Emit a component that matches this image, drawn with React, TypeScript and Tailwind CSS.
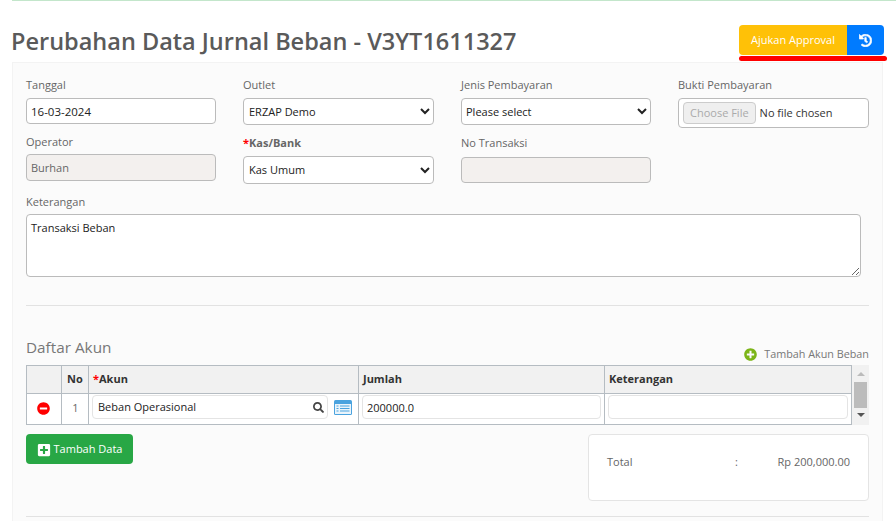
import { FaHistory, FaMinusCircle, FaPlusCircle, FaPlusSquare, FaSearch } from 'react-icons/fa';

const label = 'block text-[11px] leading-[17px] text-[#666]';
const field = 'h-[27px] w-full rounded border border-[#bbb] bg-white text-[11px] text-[#222]';
const readonly = 'w-full rounded border border-[#bbb] bg-[#f3f0ee] px-1 text-[11px] text-[#666]';

function Select({ value, className }: { value: string; className: string }) {
  return (
    <select defaultValue={value} className={`${field} ${className} [appearance:auto]`}>
      <option>{value}</option>
    </select>
  );
}

function App() {
  return (
    <div className="h-[521px] w-[896px] overflow-hidden bg-white font-['Open_Sans',sans-serif]">
      <div className="ml-[12px] h-px bg-[#c3e6cb]" />
      <div className="ml-[12px] mr-[12px] flex h-[61px] items-start justify-between">
        <h1 className="mt-[23px] -ml-[1px] text-[23.5px] leading-[34px] font-semibold text-[#5a5a5a]">
          Perubahan Data Jurnal Beban - V3YT1611327
        </h1>
        <div className="relative mt-[24px] flex h-[30px] w-[145px]">
          <button className="w-[108px] rounded-l bg-[#ffc107] text-[11px] text-white">Ajukan Approval</button>
          <button className="flex flex-1 items-center justify-center rounded-r bg-[#007bff] text-white">
            <FaHistory className="h-[13px] w-[13px]" stroke="currentColor" strokeWidth={24} />
          </button>
          <div className="absolute top-[31px] left-0 h-[5px] w-[148px] rounded-full bg-[#f00]" />
        </div>
      </div>

      <div className="ml-[12px] mr-[13px] h-[459px] border-t border-l border-r border-[#f3f3f3] bg-[#fbfbfb] pt-[13px] pr-[13px] pl-[13px]">
        <div className="grid grid-cols-[190px_191px_190px_191px] gap-x-[27px]">
          <div>
            <label className={label}>Tanggal</label>
            <input defaultValue="16-03-2024" className="mt-[5px] h-[26px] w-full rounded border border-[#bbb] bg-white px-1 text-[11.5px] text-[#222]" />
            <label className={`${label} mt-[9px]`}>Operator</label>
            <input readOnly defaultValue="Burhan" className={`${readonly} mt-[4px] h-[27px]`} />
          </div>
          <div>
            <label className={label}>Outlet</label>
            <Select value="ERZAP Demo" className="mt-[5px] pl-px" />
            <label className={`${label} mt-[9px] font-bold`}>
              <span className="text-[#f00]">*</span>Kas/Bank
            </label>
            <Select value="Kas Umum" className="mt-[5px] h-[28px] pb-[2px] pl-px" />
          </div>
          <div>
            <label className={label}>Jenis Pembayaran</label>
            <Select value="Please select" className="mt-[5px]" />
            <label className={`${label} mt-[9px]`}>No Transaksi</label>
            <input readOnly className={`${readonly} mt-[6px] h-[26px]`} />
          </div>
          <div>
            <label className={label}>Bukti Pembayaran</label>
            <div className="mt-[5px] flex h-[30px] items-center rounded border border-[#bbb] bg-white px-1 text-[11px] text-[#333]">
              <span className="rounded-sm border border-[#ccc] bg-[#efefef] px-[6px] py-[2px] leading-[16px] text-[#aaa]">Choose File</span>
              <span className="ml-[4px]">No file chosen</span>
            </div>
          </div>
        </div>

        <label className={`${label} mt-[9px]`}>Keterangan</label>
        <textarea defaultValue="Transaksi Beban" className="mt-[4px] block h-[63px] w-[835px] resize-y rounded border border-[#bbb] bg-white px-1 pt-[5px] text-[11px] text-[#222]" />

        <hr className="mt-[28px] border-[#e2e2e2]" />

        <div className="mt-[31px] flex h-[28px] items-start justify-between">
          <span className="-mt-px text-[15.3px] leading-[22px] text-[#777]">Daftar Akun</span>
          <span className="mt-[9px] flex items-center gap-[7px] text-[10.8px] leading-[16px] text-[#777]">
            <FaPlusCircle className="h-[13px] w-[13px] text-[#7cb518]" /> Tambah Akun Beban
          </span>
        </div>

        <div className="flex">
          <table className="w-[825px] table-fixed border-collapse text-[11px]">
            <colgroup>
              <col className="w-[35px]" />
              <col className="w-[27px]" />
              <col className="w-[270px]" />
              <col className="w-[246px]" />
              <col className="w-[247px]" />
            </colgroup>
            <thead>
              <tr className="h-[28px] bg-[#f1f1f1] text-[#333]">
                <th className="border border-[#b5bcc2]" />
                <th className="border border-[#b5bcc2] font-bold">No</th>
                <th className="border border-[#b5bcc2] px-1 text-left font-bold">
                  <span className="text-[#f00]">*</span>Akun
                </th>
                <th className="border border-[#b5bcc2] px-1 text-left font-bold">Jumlah</th>
                <th className="border border-[#b5bcc2] px-1 text-left font-bold">Keterangan</th>
              </tr>
            </thead>
            <tbody>
              <tr className="h-[31px] bg-white">
                <td className="border border-[#b5bcc2] pr-px pb-[2px] text-center">
                  <FaMinusCircle className="mx-auto h-[13px] w-[13px] text-[#f00]" />
                </td>
                <td className="border border-[#b5bcc2] pb-[2px] pl-px text-center text-[#666]">1</td>
                <td className="border border-[#b5bcc2] px-[3px] pt-[1px] align-top">
                  <div className="flex items-center gap-[6px]">
                    <div className="flex h-[24px] w-[236px] items-center justify-between rounded border border-[#e4e4e4] bg-white pt-px pr-[3px] pl-[5px] text-[#222]">
                      Beban Operasional
                      <FaSearch className="h-[11px] w-[11px] text-[#444]" />
                    </div>
                    <svg width="18" height="15" viewBox="0 0 18 15">
                      <rect x="0" y="0" width="18" height="15" rx="1.5" fill="#4aa3df" />
                      <rect x="1" y="4" width="16" height="10" fill="#eaf4fb" />
                      <path d="M2.5 6h2M2.5 8.5h2M2.5 11h2M6 6h9.5M6 8.5h9.5M6 11h9.5" stroke="#4aa3df" strokeWidth="1.2" />
                    </svg>
                  </div>
                </td>
                <td className="border border-[#b5bcc2] px-[3px] pt-[1px] align-top">
                  <input defaultValue="200000.0" className="h-[24px] w-full rounded border border-[#e4e4e4] bg-white px-1 text-[#222]" />
                </td>
                <td className="border border-[#b5bcc2] px-[3px] pt-[1px] align-top">
                  <input className="h-[24px] w-full rounded border border-[#e4e4e4] bg-white px-1" />
                </td>
              </tr>
            </tbody>
          </table>
          <div className="flex h-[60px] w-[18px] flex-col items-center bg-[#f1f1f1]">
            <div className="mt-[7px] h-0 w-0 border-x-[4px] border-b-[4px] border-x-transparent border-b-[#bbb]" />
            <div className="mt-[6px] h-[26px] w-[13px] bg-[#bcbcbc]" />
            <div className="mt-[5px] h-0 w-0 border-x-[4px] border-t-[4px] border-x-transparent border-t-[#555]" />
          </div>
        </div>

        <div className="mt-[9px] flex items-start justify-between">
          <button className="flex h-[30px] w-[107px] items-center justify-center gap-[3px] rounded bg-[#28a745] pt-px text-[11px] text-white">
            <FaPlusSquare className="h-[14px] w-[14px]" /> Tambah Data
          </button>
          <div className="h-[67px] w-[281px] rounded border border-[#e4e4e4] bg-white px-[18px] pt-[18px] text-[11px] leading-[17px] text-[#666]">
            <div className="flex">
              <span className="w-[128px]">Total</span>
              <span>:</span>
              <span className="ml-auto">Rp 200,000.00</span>
            </div>
          </div>
        </div>

        <hr className="mt-[15px] border-[#e2e2e2]" />
      </div>
    </div>
  );
}

export default App;
